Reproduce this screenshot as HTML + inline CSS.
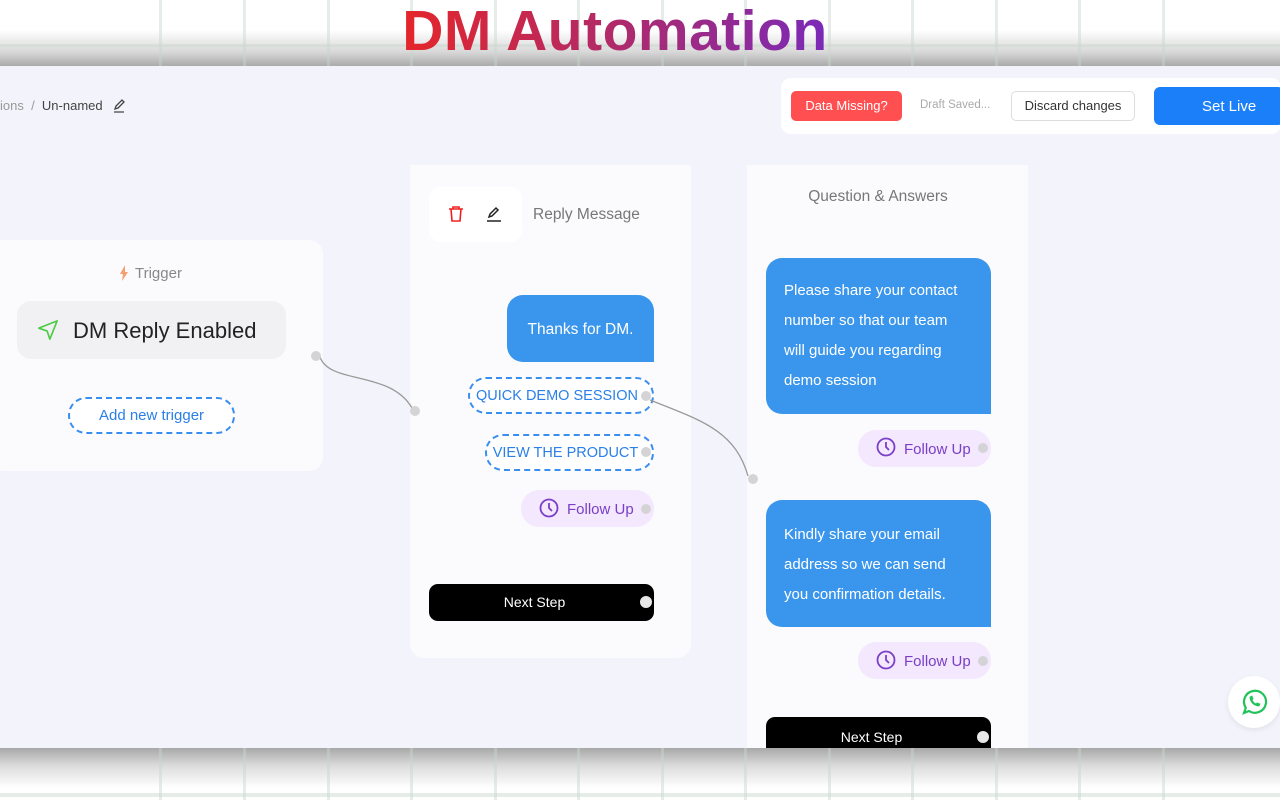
<!DOCTYPE html>
<html><head><meta charset="utf-8"><style>
*{box-sizing:border-box;margin:0;padding:0}
body{width:1280px;height:800px;overflow:hidden;position:relative;font-family:"Liberation Sans",sans-serif;background:#fff}
.a{position:absolute}
.top{left:0;top:0;width:1280px;height:66px;background:linear-gradient(#fff 0,#fff 30px,#d8d8d8 52px,#a9aaa9 66px)}
.bot{left:0;top:748px;width:1280px;height:52px;background:linear-gradient(#a8a8a8 0,#dcdcdc 18px,#fff 40px)}
.vl{position:absolute;width:3px;background:rgba(200,215,205,.45)}
.canvas{left:0;top:66px;width:1280px;height:682px;background:#f3f4fb}
.title{left:0;width:1230px;top:-2px;text-align:center;font-size:57px;font-weight:bold;letter-spacing:0.5px}
.title span{background:linear-gradient(90deg,#e4262a,#b02a6a 50%,#7a2ab8);-webkit-background-clip:text;background-clip:text;color:transparent}
.card{background:#fbfbfd;border-radius:14px}
.bub{background:#3a96ec;color:#fff;border-radius:16px 16px 0 16px}
.dash{border:2px dashed #3a8ef0;border-radius:18px;color:#2a7fe8;background:#fff;text-align:center;font-size:14.5px}
.fu{background:#f3e8fd;border-radius:18px;color:#7a3ec8;font-size:15px}
.dot{width:10px;height:10px;border-radius:50%;background:#d4d4d6}
.ns{background:#000;color:#fff;border-radius:9px;font-size:14px;text-align:center}
</style></head><body>
<div class="a top"></div>
<div class="a canvas"></div>

<div class="a" style="left:0;top:98px;font-size:13px;color:#999">ions &nbsp;/&nbsp; <span style="color:#444">Un-named</span></div>
<svg class="a" style="left:112px;top:99px" width="14" height="14" viewBox="0 0 14 14" fill="none" stroke="#444" stroke-width="1.3"><path d="M3 10l1-3 6-6 2 2-6 6-3 1zM2 13h10"/></svg>

<div class="a" style="left:781px;top:78px;width:500px;height:56px;background:#fff;border-radius:10px"></div>
<div class="a" style="left:791px;top:91px;width:111px;height:30px;background:#ff4f51;border-radius:5px;color:#fff;font-size:13px;text-align:center;line-height:30px">Data Missing?</div>
<div class="a" style="left:920px;top:99px;font-size:11.5px;color:#aaa">Draft Saved...</div>
<div class="a" style="left:1011px;top:91px;width:124px;height:30px;border:1px solid #ddd;border-radius:5px;font-size:13px;color:#333;text-align:center;line-height:28px">Discard changes</div>
<div class="a" style="left:1154px;top:87px;width:130px;height:38px;background:#1a7ff8;border-radius:6px;color:#fff;font-size:15px;line-height:40px;padding-left:48px">Set Live</div>

<!-- trigger card -->
<div class="a card" style="left:-10px;top:240px;width:333px;height:231px"></div>
<svg class="a" style="left:119px;top:265px" width="10" height="16" viewBox="0 0 10 16"><path d="M6 0L1 9h3l-1 7 6-9H6z" fill="#f5a070"/></svg>
<div class="a" style="left:135px;top:265px;font-size:15px;color:#888">Trigger</div>
<div class="a" style="left:17px;top:301px;width:269px;height:58px;background:#f1f1f3;border-radius:14px"></div>
<svg class="a" style="left:37px;top:319px" width="22" height="22" viewBox="0 0 24 24" fill="none" stroke="#4ccc44" stroke-width="1.8" stroke-linejoin="round"><path d="M22 2L2 10l9 3 3 9z"/></svg>
<div class="a" style="left:73px;top:318px;font-size:22px;color:#222">DM Reply Enabled</div>
<div class="a dash" style="left:68px;top:397px;width:167px;height:37px;line-height:33px;font-size:15px">Add new trigger</div>

<!-- reply card -->
<div class="a card" style="left:410px;top:165px;width:281px;height:493px;border-radius:0 0 14px 14px"></div>
<div class="a" style="left:429px;top:187px;width:93px;height:55px;background:#fff;border-radius:12px"></div>
<svg class="a" style="left:447px;top:205px" width="18" height="18" viewBox="0 0 18 18" fill="none" stroke="#f02020" stroke-width="1.6"><path d="M2 4h14M6 4V2h6v2M4 4l1 12h8l1-12"/></svg>
<svg class="a" style="left:485px;top:205px" width="18" height="18" viewBox="0 0 18 18" fill="none" stroke="#222" stroke-width="1.5"><path d="M4 12l1-3 6-6 2 2-6 6-3 1zM2 16h14"/></svg>
<div class="a" style="left:533px;top:206px;font-size:15.5px;color:#777">Reply Message</div>
<div class="a bub" style="left:507px;top:295px;width:147px;height:67px;font-size:15.5px;line-height:70px;text-align:center">Thanks for DM.</div>
<div class="a dash" style="left:468px;top:377px;width:186px;height:37px;line-height:35px;padding-right:8px">QUICK DEMO SESSION</div>
<div class="a dash" style="left:485px;top:434px;width:169px;height:37px;line-height:35px;padding-right:8px">VIEW THE PRODUCT</div>
<div class="a fu" style="left:521px;top:490px;width:133px;height:37px;line-height:39px;padding-left:46px">Follow Up</div>
<svg class="a" style="left:539px;top:498px" width="20" height="20" viewBox="0 0 20 20" fill="none" stroke="#7a3ec8" stroke-width="1.8"><circle cx="10" cy="10" r="8.5"/><path d="M10 5v5l3 3"/></svg>
<div class="a ns" style="left:429px;top:584px;width:225px;height:37px;line-height:37px;padding-right:14px">Next Step</div>

<!-- Q&A card -->
<div class="a card" style="left:747px;top:165px;width:281px;height:590px;border-radius:0"></div>
<div class="a" style="left:747px;top:188px;width:262px;text-align:center;font-size:15.5px;color:#777">Question &amp; Answers</div>
<div class="a bub" style="left:766px;top:258px;width:225px;height:156px;font-size:15px;line-height:30px;padding:18px 20px 0 18px">Please share your contact number so that our team will guide you regarding demo session</div>
<div class="a fu" style="left:858px;top:430px;width:133px;height:37px;line-height:39px;padding-left:46px">Follow Up</div>
<svg class="a" style="left:876px;top:437px" width="20" height="20" viewBox="0 0 20 20" fill="none" stroke="#7a3ec8" stroke-width="1.8"><circle cx="10" cy="10" r="8.5"/><path d="M10 5v5l3 3"/></svg>
<div class="a bub" style="left:766px;top:500px;width:225px;height:127px;font-size:15px;line-height:30px;padding:20px 24px 0 18px">Kindly share your email address so we can send you confirmation details.</div>
<div class="a fu" style="left:858px;top:642px;width:133px;height:37px;line-height:39px;padding-left:46px">Follow Up</div>
<svg class="a" style="left:876px;top:650px" width="20" height="20" viewBox="0 0 20 20" fill="none" stroke="#7a3ec8" stroke-width="1.8"><circle cx="10" cy="10" r="8.5"/><path d="M10 5v5l3 3"/></svg>
<div class="a ns" style="left:766px;top:717px;width:225px;height:40px;line-height:40px;border-radius:9px 9px 0 0;padding-right:14px">Next Step</div>

<svg class="a" style="left:0;top:0" width="1280" height="800" fill="none" stroke="#9a9a9a" stroke-width="1.3">
<path d="M320 357 C330 385,390 370,412 408"/>
<path d="M650 400 C700 420,735 430,748 476"/>
</svg>
<div class="a dot" style="left:311px;top:351px"></div>
<div class="a dot" style="left:410px;top:406px"></div>
<div class="a dot" style="left:748px;top:474px"></div>
<div class="a dot" style="left:641px;top:391px"></div>
<div class="a dot" style="left:641px;top:447px"></div>
<div class="a dot" style="left:641px;top:504px"></div>
<div class="a dot" style="left:640px;top:596px;background:#e8e8e8;width:12px;height:12px"></div>
<div class="a dot" style="left:978px;top:443px"></div>
<div class="a dot" style="left:978px;top:656px"></div>
<div class="a dot" style="left:977px;top:731px;background:#e8e8e8;width:12px;height:12px"></div>

<div class="a" style="left:1228px;top:676px;width:52px;height:52px;border-radius:50%;background:#fff;box-shadow:0 2px 6px rgba(0,0,0,.08)"></div>
<svg class="a" style="left:1240px;top:688px" width="28" height="28" viewBox="0 0 28 28" fill="none" stroke="#22c25a" stroke-width="2.2"><path d="M4 25l1.8-5.2A11 11 0 1 1 9 23z"/><path d="M10 9c0 5 4 9 9 9l1-2-3-1-1 1c-2-1-3-2-4-4l1-1-1-3z" fill="#22c25a" stroke-width="0.8"/></svg>

<div class="a bot"></div>
<div class="a" style="left:0;top:0;width:1280px;height:800px">
<div class="vl" style="left:159px;top:0;height:66px"></div><div class="vl" style="left:243px;top:0;height:66px"></div><div class="vl" style="left:327px;top:0;height:66px"></div><div class="vl" style="left:410px;top:0;height:66px"></div><div class="vl" style="left:494px;top:0;height:66px"></div><div class="vl" style="left:577px;top:0;height:66px"></div><div class="vl" style="left:661px;top:0;height:66px"></div><div class="vl" style="left:744px;top:0;height:66px"></div><div class="vl" style="left:828px;top:0;height:66px"></div><div class="vl" style="left:911px;top:0;height:66px"></div><div class="vl" style="left:995px;top:0;height:66px"></div><div class="vl" style="left:1078px;top:0;height:66px"></div><div class="vl" style="left:1162px;top:0;height:66px"></div>
<div class="vl" style="left:0;top:44px;width:1280px;height:3px"></div>
<div class="vl" style="left:159px;top:748px;height:52px"></div><div class="vl" style="left:243px;top:748px;height:52px"></div><div class="vl" style="left:327px;top:748px;height:52px"></div><div class="vl" style="left:410px;top:748px;height:52px"></div><div class="vl" style="left:494px;top:748px;height:52px"></div><div class="vl" style="left:577px;top:748px;height:52px"></div><div class="vl" style="left:661px;top:748px;height:52px"></div><div class="vl" style="left:744px;top:748px;height:52px"></div><div class="vl" style="left:828px;top:748px;height:52px"></div><div class="vl" style="left:911px;top:748px;height:52px"></div><div class="vl" style="left:995px;top:748px;height:52px"></div><div class="vl" style="left:1078px;top:748px;height:52px"></div><div class="vl" style="left:1162px;top:748px;height:52px"></div>
<div class="vl" style="left:0;top:793px;width:1280px;height:4px"></div>
</div>
<div class="a title"><span>DM Automation</span></div>
</body></html>
